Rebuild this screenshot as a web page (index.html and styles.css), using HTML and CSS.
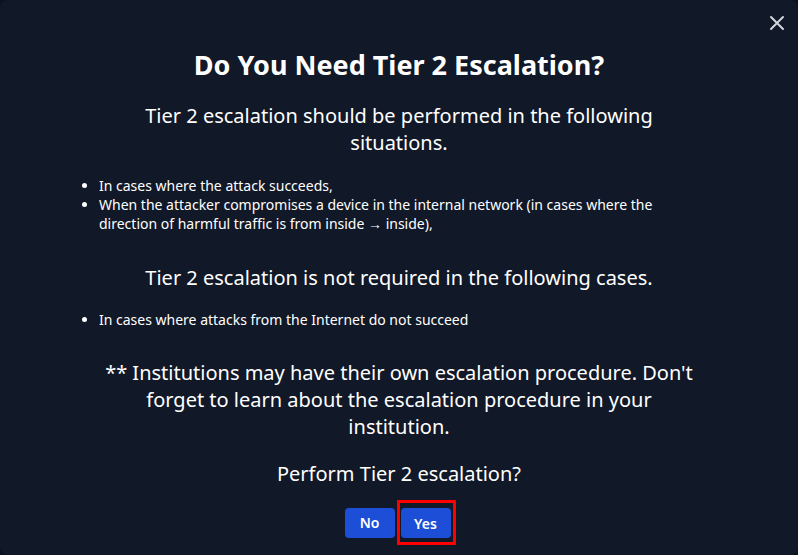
FILE: index.html
```html
<!DOCTYPE html>
<html lang="en">
<head>
<meta charset="utf-8">
<title>Tier 2 Escalation</title>
<link rel="stylesheet" href="styles.css">
</head>
<body>
<div class="modal">
  <button class="close" aria-label="Close">
    <svg width="16" height="16" viewBox="0 0 16 16"><path d="M2 2L14 14M14 2L2 14" stroke="#d1d5db" stroke-width="2" stroke-linecap="round"/></svg>
  </button>
  <h1 class="title">Do You Need Tier 2 Escalation?</h1>
  <p class="lead">Tier 2 escalation should be performed in the following situations.</p>
  <ul class="list">
    <li>In cases where the attack succeeds,</li>
    <li>When the attacker compromises a device in the internal network (in cases where the direction of harmful traffic is from inside → inside),</li>
  </ul>
  <p class="lead lead-2">Tier 2 escalation is not required in the following cases.</p>
  <ul class="list list-2">
    <li>In cases where attacks from the Internet do not succeed</li>
  </ul>
  <p class="lead note">** Institutions may have their own escalation procedure. Don't forget to learn about the escalation procedure in your institution.</p>
  <p class="lead question">Perform Tier 2 escalation?</p>
  <div class="actions">
    <button class="btn">No</button>
    <span class="highlight"><button class="btn">Yes</button></span>
  </div>
</div>
</body>
</html>
```
FILE: styles.css
```css
html, body {
  margin: 0;
  padding: 0;
  background: #0b1220;
}
.modal {
  position: relative;
  width: 798px;
  height: 555px;
  box-sizing: border-box;
  background: #111827;
  border-radius: 8px;
  color: #ffffff;
  font-family: "Noto Sans", "Open Sans", sans-serif;
  padding: 43px 80px 0 80px;
  text-align: center;
}
.close {
  position: absolute;
  top: 15px;
  right: 13px;
  background: none;
  border: 0;
  padding: 0;
  width: 16px;
  height: 16px;
  cursor: pointer;
}
.close svg { display: block; }
.title {
  margin: 0;
  font-size: 27px;
  line-height: 44px;
  font-weight: 700;
}
.lead {
  margin: 0;
  font-size: 20px;
  line-height: 27px;
  padding: 0 60px;
}
.title + .lead { margin-top: 15px; }
.list {
  text-align: left;
  margin: 20px 0 0 0;
  padding: 0 60px 0 19px;
  font-size: 14px;
  line-height: 19px;
}
.lead-2 { margin-top: 31px; }
.list-2 { margin-top: 19px; }
.note { margin-top: 30px; padding: 0 24px; }
.question { margin-top: 20px; }
.actions {
  display: flex;
  justify-content: center;
  align-items: center;
  gap: 2px;
  margin-top: 13px;
  padding-left: 2px;
}
.btn {
  background: #1d4ed8;
  color: #ffffff;
  border: 0;
  border-radius: 4px;
  font-family: inherit;
  font-size: 14px;
  font-weight: 600;
  width: 50px;
  height: 30px;
  padding: 0;
}
.highlight {
  display: flex;
  border: 3px solid #ff0000;
  padding: 5px 2px 4px 1px;
}
```
